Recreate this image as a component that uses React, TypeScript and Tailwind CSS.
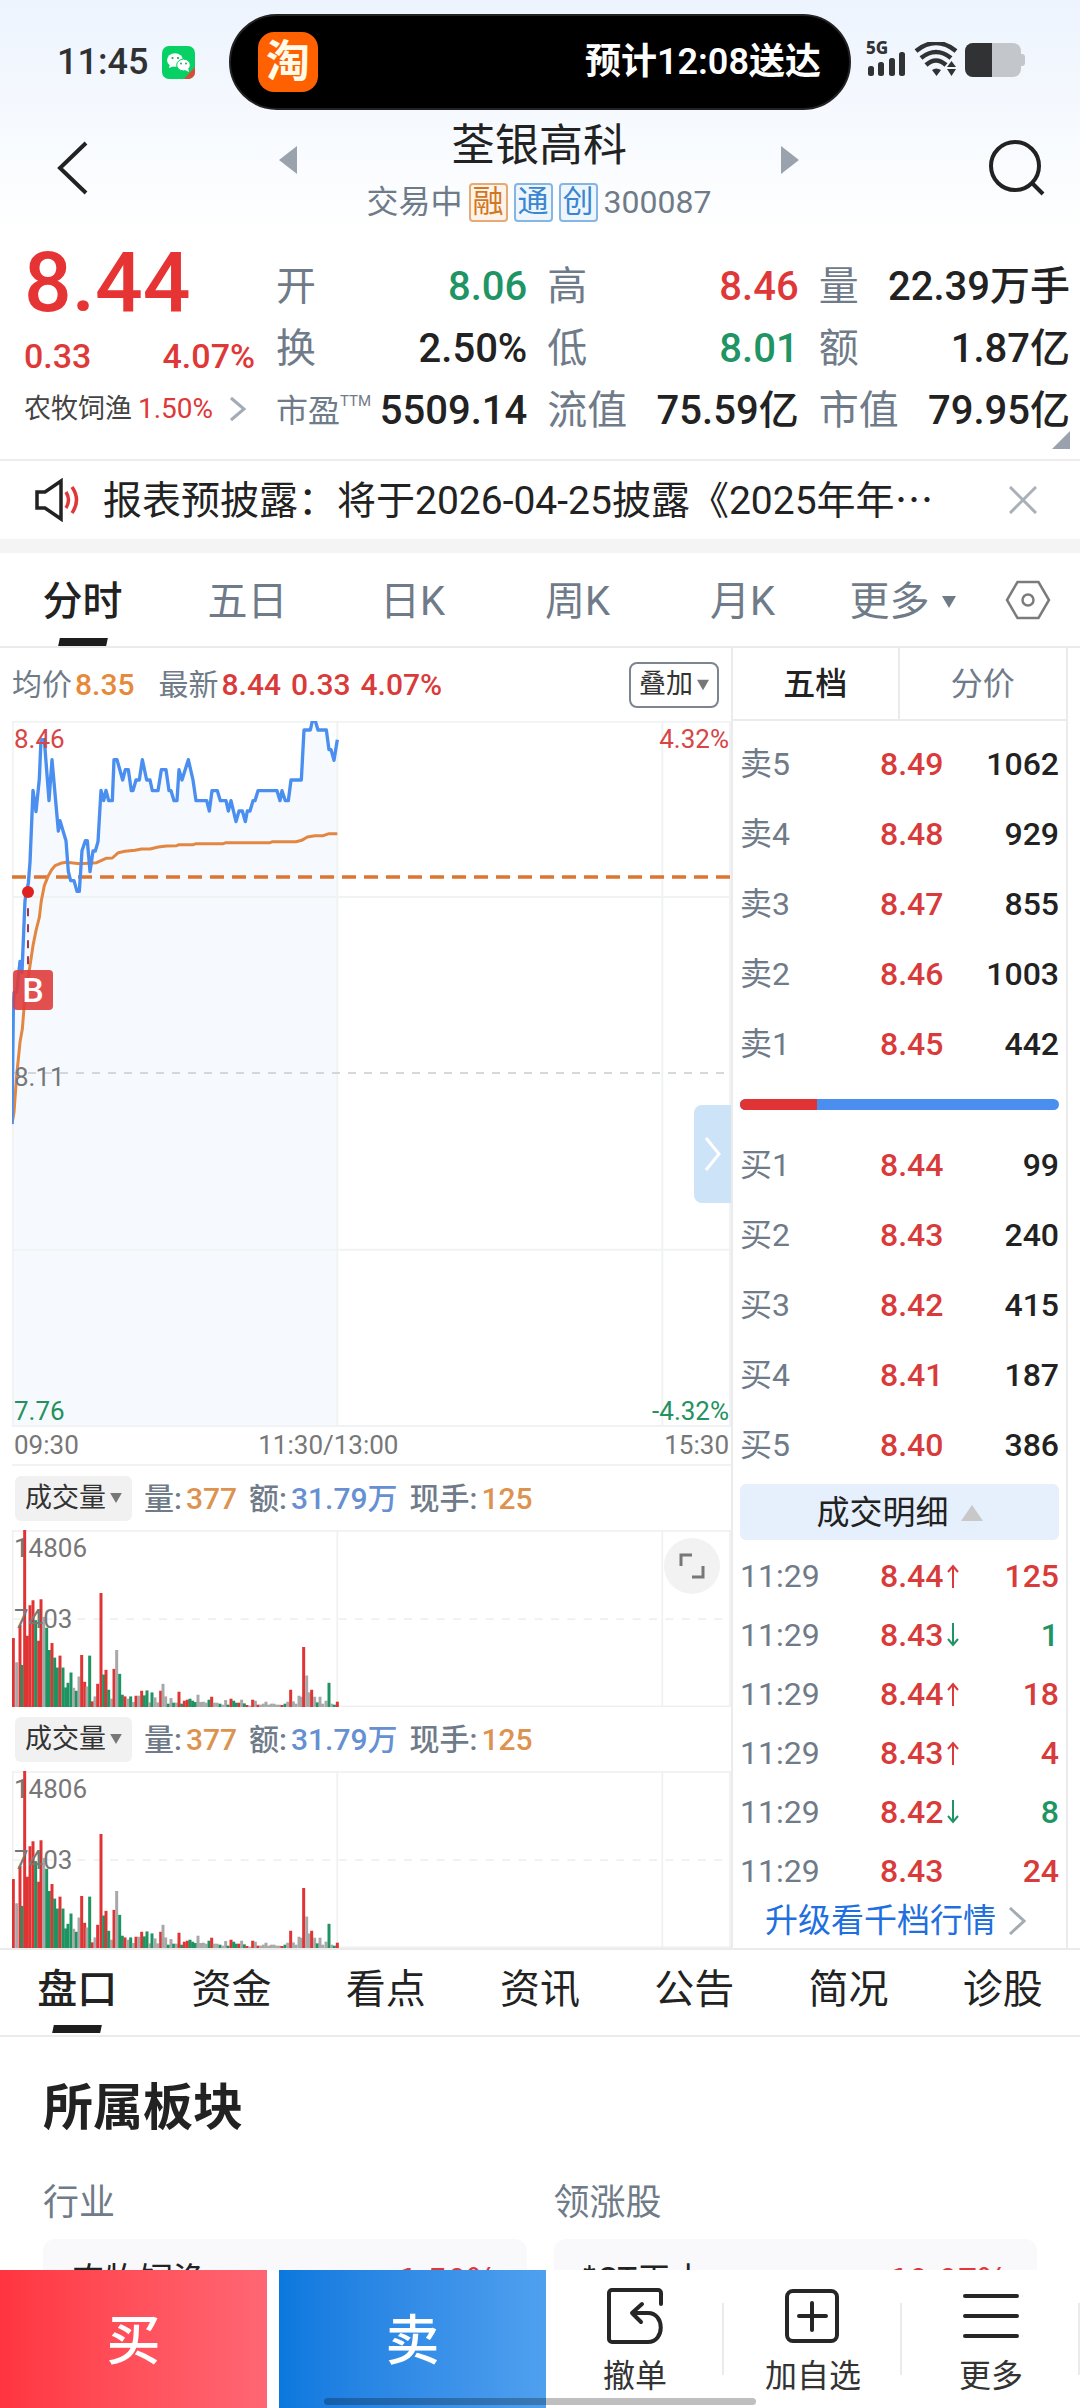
import React from "react";

type Tone = "r" | "g" | "n";

const PRICE_LINE =
  "36,1275 40,930 42,880 50,880 60,787 66,820 75,604 85,552 90,490 99,274 108,338 118,240 123,122 133,122 147,305 156,182 175,396 180,365 198,425 205,518 212,545 222,545 231,577 238,577 246,455 256,425 262,425 270,518 279,456 286,456 294,428 303,274 311,305 318,274 326,305 337,305 342,182 351,182 368,243 376,212 385,212 394,275 399,275 408,243 418,243 427,182 440,243 450,243 457,275 474,275 484,212 498,212 507,275 513,275 522,305 531,305 537,212 546,243 565,182 579,243 588,305 620,305 628,336 636,275 652,275 661,305 678,305 685,336 693,305 708,368 717,336 727,336 736,368 742,336 750,336 759,305 765,305 774,275 831,275 840,305 846,275 856,305 865,305 873,243 904,243 912,93 931,93 937,66 946,66 954,93 979,93 987,152 993,152 1002,184 1012,122";

const AVERAGE_LINE =
  "36,1275 42,1240 50,1130 60,1030 67,990 75,890 90,800 99,740 108,695 118,655 124,605 133,560 145,530 155,512 165,500 182,493 198,490 240,494 290,491 318,478 337,477 355,461 375,457 405,454 425,450 450,450 475,444 500,441 530,440 537,437 580,437 588,434 670,434 678,431 810,431 818,428 888,428 905,424 922,414 945,410 970,410 987,404 1012,404";

const VOLUME_BARS: [number, number, Tone][] = [
  [40, 354, "r"], [50, 427, "n"], [60, 315, "r"], [66, 435, "g"], [74, 28, "r"], [82, 347, "r"],
  [90, 255, "r"], [99, 240, "r"], [107, 300, "g"], [116, 362, "r"], [123, 237, "r"], [131, 290, "n"],
  [140, 323, "g"], [148, 390, "g"], [156, 369, "r"], [164, 413, "g"], [172, 443, "g"], [180, 407, "r"],
  [189, 443, "g"], [197, 503, "g"], [204, 489, "g"], [213, 458, "g"], [221, 504, "n"], [229, 513, "g"],
  [237, 470, "n"], [245, 405, "r"], [254, 486, "r"], [261, 500, "n"], [269, 407, "g"], [277, 545, "r"],
  [285, 530, "n"], [293, 492, "r"], [303, 218, "r"], [311, 464, "g"], [318, 450, "r"], [326, 510, "g"],
  [334, 537, "n"], [342, 447, "r"], [350, 390, "n"], [359, 462, "g"], [367, 525, "g"], [375, 530, "r"],
  [384, 537, "n"], [392, 530, "g"], [400, 547, "n"], [408, 528, "r"], [416, 528, "n"], [425, 513, "r"],
  [433, 527, "g"], [441, 512, "g"], [449, 548, "n"], [456, 518, "g"], [465, 533, "n"], [473, 548, "n"],
  [482, 513, "r"], [489, 492, "n"], [497, 530, "n"], [505, 552, "g"], [513, 535, "n"], [521, 549, "g"],
  [529, 549, "n"], [537, 516, "r"], [545, 552, "g"], [553, 543, "r"], [562, 540, "r"], [570, 537, "g"],
  [578, 543, "g"], [586, 547, "g"], [594, 525, "n"], [602, 547, "n"], [610, 546, "n"], [618, 549, "n"],
  [627, 540, "g"], [635, 531, "r"], [643, 549, "n"], [651, 549, "n"], [660, 552, "g"], [668, 555, "n"],
  [677, 541, "n"], [684, 555, "g"], [693, 537, "r"], [701, 543, "g"], [709, 549, "g"], [717, 549, "r"],
  [725, 540, "n"], [733, 551, "g"], [741, 556, "r"], [749, 558, "n"], [758, 540, "r"], [766, 543, "n"],
  [774, 555, "r"], [782, 555, "n"], [790, 552, "n"], [798, 546, "n"], [806, 555, "n"], [814, 552, "n"],
  [822, 552, "n"], [830, 555, "n"], [838, 555, "n"], [846, 556, "r"], [855, 552, "g"], [863, 546, "n"],
  [872, 510, "r"], [880, 545, "n"], [888, 552, "n"], [897, 528, "n"], [904, 531, "n"], [911, 381, "r"],
  [920, 467, "n"], [928, 518, "n"], [935, 510, "r"], [944, 531, "n"], [952, 548, "g"], [960, 531, "n"],
  [968, 552, "n"], [978, 543, "n"], [987, 489, "g"], [995, 552, "n"], [1003, 555, "g"], [1012, 546, "r"],
];

const BAR_COLOR: Record<Tone, string> = { r: "#e03434", g: "#1e9463", n: "#a8a8a8" };

const SELLS = [["卖5", "8.49", "1062"], ["卖4", "8.48", "929"], ["卖3", "8.47", "855"], ["卖2", "8.46", "1003"], ["卖1", "8.45", "442"]];
const BUYS = [["买1", "8.44", "99"], ["买2", "8.43", "240"], ["买3", "8.42", "415"], ["买4", "8.41", "187"], ["买5", "8.40", "386"]];
const TRADES: [string, "up" | "down" | "", string, Tone][] = [
  ["8.44", "up", "125", "r"],
  ["8.43", "down", "1", "g"],
  ["8.44", "up", "18", "r"],
  ["8.43", "up", "4", "r"],
  ["8.42", "down", "8", "g"],
  ["8.43", "", "24", "r"],
];

function Stat({ label, value, tone = "text-[#222]" }: { label: React.ReactNode; value: string; tone?: string }) {
  return (
    <div className="flex h-[62px] items-center justify-between whitespace-nowrap">
      <dt className="text-[40px] text-[#6f7b88]">{label}</dt>
      <dd className={`text-[40px] font-medium ${tone}`}>{value}</dd>
    </div>
  );
}

function Caret({ className }: { className: string }) {
  return (
    <svg viewBox="0 0 14 12" className={className} aria-hidden="true">
      <path d="M0 0h14L7 12z" fill="currentColor" />
    </svg>
  );
}

function StatusBar() {
  return (
    <div className="flex h-[110px] pt-[14px]">
      <div className="flex w-[229px] shrink-0 items-center gap-3.5 pl-[57px]">
        <span className="text-[36px] font-medium text-[#2f3133]">11:45</span>
        <svg viewBox="0 0 33 33" className="size-[33px]" aria-hidden="true">
          <rect width="33" height="33" rx="7" fill="#07d065" />
          <path d="M33 21v5a7 7 0 0 1-7 7h-4z" fill="#dc4a38" />
          <ellipse cx="13" cy="14" rx="8" ry="6.8" fill="#fff" />
          <path d="M8 18l-1 4 5-2z" fill="#fff" />
          <ellipse cx="21.500" cy="19" rx="6.800" ry="5.900" fill="#fff" stroke="#07d065" />
          <path d="M23 24l4 2-1-4z" fill="#fff" />
          <g fill="#12a357">
            <circle cx="10.500" cy="12" r="1.100" />
            <circle cx="16" cy="12" r="1.100" />
            <circle cx="19" cy="17.500" r="0.900" />
            <circle cx="24" cy="17.500" r="0.900" />
          </g>
        </svg>
      </div>
      <div className="flex h-[96px] flex-1 items-center justify-between rounded-full border-2 border-[#222] bg-black pl-[27px] pr-[28px]">
        <span className="flex size-[60px] items-center justify-center rounded-[16px] bg-[#ff6000] text-[44px] font-bold leading-none text-[#fffbe8]">
          淘
        </span>
        <span className="text-[36px] font-semibold text-white">预计12:08送达</span>
      </div>
      <div className="flex w-[229px] shrink-0 items-center pb-1 pl-[15px]">
        <div className="relative">
          <span className="absolute -top-1.5 left-0 font-['Noto_Sans',sans-serif] text-[17px] font-extrabold leading-6 text-[#303234]">5G</span>
          <svg viewBox="0 0 160 36" className="h-9 w-40" aria-hidden="true">
            <g fill="#303234">
              <rect x="2" y="24" width="6" height="10" rx="2.500" />
              <rect x="12" y="20" width="6" height="14" rx="2.500" />
              <rect x="23" y="16" width="6" height="18" rx="2.500" />
              <rect x="33" y="10" width="6" height="24" rx="2.500" />
              <path d="M66 28q4-3 9 0l-4.500 6z" />
              <path d="M81 27h9l-4.500 7zM81 25h9l-4.500-6z" />
            </g>
            <g fill="none" stroke="#303234" strokeWidth="4.500">
              <path d="M50 9Q70-7 90 9" />
              <path d="M55 16Q70 4 85 16" />
              <path d="M60 23Q70 14 80 23" />
            </g>
            <rect x="99" y="1" width="56" height="34" rx="8" fill="#c3c6ca" />
            <path d="M155 12h1a3 3 0 0 1 3 3v6a3 3 0 0 1-3 3h-1z" fill="#c3c6ca" />
            <path d="M126 1v34h-19a8 8 0 0 1-8-8V9a8 8 0 0 1 8-8z" fill="#303234" />
          </svg>
        </div>
      </div>
    </div>
  );
}

function Header() {
  return (
    <header className="flex h-[126px] items-start justify-between pl-[54px] pr-[34px]">
      <button aria-label="返回" className="mt-[31px]">
        <svg viewBox="0 0 36 54" className="h-[54px] w-9" fill="none" stroke="#222" strokeWidth="4">
          <path d="M32 2L6 27l26 25" />
        </svg>
      </button>
      <div className="flex w-[520px] items-start justify-between">
        <button aria-label="上一只" className="mt-9 text-[#9aa3ad]">
          <svg viewBox="0 0 18 28" className="h-7 w-[18px]"><path d="M18 0v28L0 14z" fill="currentColor" /></svg>
        </button>
        <div className="flex flex-col items-center whitespace-nowrap">
          <h1 className="h-[70px] text-[44px] leading-[72px] text-[#222]">荃银高科</h1>
          <div className="flex h-[44px] items-center gap-1.5 text-[32px] text-[#6f7b88]">
            <span>交易中</span>
            <span className="flex size-[39px] items-center justify-center rounded-sm border-2 border-[#e5aa75] bg-[#fdf3e8] text-[31px] text-[#d2761f]">融</span>
            <span className="flex size-[39px] items-center justify-center rounded-sm border-2 border-[#86b5e3] bg-[#eef6fd] text-[31px] text-[#3a86cf]">通</span>
            <span className="flex size-[39px] items-center justify-center rounded-sm border-2 border-[#86b5e3] bg-[#eef6fd] text-[31px] text-[#3a86cf]">创</span>
            <span>300087</span>
          </div>
        </div>
        <button aria-label="下一只" className="mt-9 text-[#9aa3ad]">
          <svg viewBox="0 0 18 28" className="h-7 w-[18px]"><path d="M0 0v28l18-14z" fill="currentColor" /></svg>
        </button>
      </div>
      <button aria-label="搜索" className="mt-[29px]">
        <svg viewBox="0 0 58 58" className="size-[58px]" fill="none" stroke="#222" strokeWidth="4">
          <circle cx="27" cy="27" r="24" />
          <path d="M44 44l11 11" />
        </svg>
      </button>
    </header>
  );
}

function Quote() {
  return (
    <section className="relative flex h-[223px] pt-3 pr-2.5">
      <div className="flex w-[276px] shrink-0 flex-col pl-6">
        <div className="h-[70px] text-[84px] font-medium leading-[70px] text-[#e63434]">8.44</div>
        <div className="mt-3 flex h-[52px] w-[231px] items-center justify-between text-[34px] font-medium text-[#de3838]">
          <span>0.33</span>
          <span>4.07%</span>
        </div>
        <a href="#sector" className="flex h-[54px] items-center gap-1.5 whitespace-nowrap text-[27px] text-[#444]">
          农牧饲渔
          <span className="text-[28px] text-[#de3838]">1.50%</span>
          <svg viewBox="0 0 18 26" className="ml-2.5 h-[26px] w-[18px]" fill="none" stroke="#a3abb5" strokeWidth="3">
            <path d="M2 2l13 11L2 24" />
          </svg>
        </a>
      </div>
      <dl className="mt-2 grid h-fit flex-1 grid-cols-3 gap-x-5">
        <Stat label="开" value="8.06" tone="text-[#1f9465]" />
        <Stat label="高" value="8.46" tone="text-[#de3838]" />
        <Stat label="量" value="22.39万手" />
        <Stat label="换" value="2.50%" />
        <Stat label="低" value="8.01" tone="text-[#1f9465]" />
        <Stat label="额" value="1.87亿" />
        <Stat
          label={<span className="flex text-[32px]">市盈<span className="text-[15px] leading-7">TTM</span></span>}
          value="5509.14"
        />
        <Stat label="流值" value="75.59亿" />
        <Stat label="市值" value="79.95亿" />
      </dl>
      <svg viewBox="0 0 18 18" className="absolute right-2.5 bottom-2.5 size-[18px]" aria-hidden="true">
        <path d="M18 0v18H0z" fill="#9aa3ad" />
      </svg>
    </section>
  );
}

function Notice() {
  return (
    <div className="flex h-[94px] items-center border-t-2 border-b-[14px] border-t-[#ededed] border-b-[#f4f4f4] pl-[35px] pr-[43px]">
      <svg viewBox="0 0 46 44" className="h-11 w-[46px] shrink-0" fill="none" aria-hidden="true">
        <path d="M2 14h8L26 3v38L10 30H2z" stroke="#222" strokeWidth="3.500" />
        <path d="M31 14q5 8 0 16M37 9q9 13 0 26" stroke="#de3838" strokeWidth="3.500" />
      </svg>
      <p className="ml-[22px] flex-1 whitespace-nowrap pt-0.5 text-[39px] text-[#222]">
        报表预披露：将于2026-04-25披露《2025年年⋯
      </p>
      <button aria-label="关闭">
        <svg viewBox="0 0 28 28" className="size-7" fill="none" stroke="#a9b0b8" strokeWidth="3">
          <path d="M1 1l26 26M27 1L1 27" />
        </svg>
      </button>
    </div>
  );
}

function ChartTabs() {
  return (
    <nav className="grid h-[95px] grid-cols-[165fr_165fr_165fr_165fr_165fr_155fr_100fr] border-b-2 border-[#ebebeb] text-[40px] text-[#6f7b88]">
      <button className="relative pt-1 font-medium text-[#222]">
        分时
        <span className="absolute bottom-0 left-1/2 h-2 w-12 -translate-x-1/2 -skew-x-12 bg-[#1d1d1d]" />
      </button>
      <button className="pt-1">五日</button>
      <button className="pt-1">日K</button>
      <button className="pt-1">周K</button>
      <button className="pt-1">月K</button>
      <button className="flex items-center justify-center gap-3 pt-1">更多<Caret className="h-3 w-3.5" /></button>
      <button aria-label="设置" className="flex items-center justify-center pr-1">
        <svg viewBox="0 0 46 40" className="h-10 w-[46px]" fill="none" stroke="#7b7b7b" strokeWidth="2.500">
          <path d="M12.500 2h21L44 20 33.500 38h-21L2 20z" />
          <circle cx="23" cy="20" r="5.500" />
        </svg>
      </button>
    </nav>
  );
}

function PriceChart() {
  return (
    <div className="relative h-[706px] text-[26px] leading-8">
      <svg viewBox="36 66 2157 2118" preserveAspectRatio="none" className="absolute inset-0 h-full w-full" aria-label="分时走势">
        <polygon points={`36,2184 ${PRICE_LINE} 1012,2184`} fill="#f6faff" />
        <g stroke="#f1f2f4" strokeWidth="6" fill="none">
          <path d="M36 68H2193M36 594H2193M36 1652H2193M36 2181H2193M38 66V2184M1012 66V2184M1987 66V2184M2190 66V2184" />
        </g>
        <path d="M36 1122H2193" stroke="#c9cbce" strokeWidth="5" strokeDasharray="24 24" />
        <path d="M36 534H2193" stroke="#dd7430" strokeWidth="10" strokeDasharray="42 24" />
        <polyline points={AVERAGE_LINE} fill="none" stroke="#e38641" strokeWidth="9" strokeLinejoin="round" />
        <polyline points={PRICE_LINE} fill="none" stroke="#4a8ff0" strokeWidth="10" strokeLinejoin="round" />
        <path d="M84 604V800" stroke="#a03a48" strokeWidth="6" strokeDasharray="24 24" strokeDashoffset="24" />
        <circle cx="84" cy="579" r="18" fill="#de2222" />
      </svg>
      <span className="absolute left-0.5 top-0.5 text-[#d84545]">8.46</span>
      <span className="absolute right-0.5 top-0.5 text-[#d84545]">4.32%</span>
      <span className="absolute left-0.5 top-[340px] text-[#777]">8.11</span>
      <span className="absolute bottom-0 left-0.5 text-[#24915f]">7.76</span>
      <span className="absolute bottom-0 right-0.5 text-[#24915f]">-4.32%</span>
      <span className="absolute left-px top-[249px] flex size-10 items-center justify-center rounded-sm bg-[#e03c3c]/90 text-[34px] font-medium text-white">B</span>
      <button aria-label="展开" className="absolute right-0 top-[384px] flex h-[98px] w-[37px] items-center justify-center rounded-l-lg bg-[#cde3f8]">
        <svg viewBox="0 0 18 34" className="h-[34px] w-[18px]" fill="none" stroke="#fff" strokeWidth="3">
          <path d="M2 1l13 16L2 33" />
        </svg>
      </button>
    </div>
  );
}

function VolumePanel({ expandable = false }: { expandable?: boolean }) {
  return (
    <section>
      <div className="flex h-16 items-center gap-3 pl-[3px] text-[30px] font-medium text-[#6f7b88]">
        <button className="flex h-[45px] w-[117px] items-center justify-center gap-1 rounded-md bg-[#f1f1f1] text-[27px] font-normal text-[#333]">
          成交量<Caret className="h-2.5 w-3 text-[#777]" />
        </button>
        <span>量:<b className="ml-1 font-medium text-[#dd9350]">377</b></span>
        <span>额:<b className="ml-1 font-medium text-[#6790d2]">31.79万</b></span>
        <span>现手:<b className="ml-1 font-medium text-[#dd9350]">125</b></span>
      </div>
      <div className="relative h-[177px] text-[26px] leading-8 text-[#777]">
        <svg viewBox="36 28 2157 534" preserveAspectRatio="none" className="absolute inset-0 h-full w-full" aria-label="成交量">
          <g stroke="#f0f0f0" strokeWidth="5" fill="none">
            <path d="M36 31H2193M36 560H2193M38 28V562M1012 28V562M1987 28V562M2190 28V562" />
            <path d="M36 297H2175" strokeDasharray="24 25" />
          </g>
          {VOLUME_BARS.map(([x, y, tone]) => (
            <path key={x} d={`M${x} ${y}V562`} stroke={BAR_COLOR[tone]} strokeWidth="9" />
          ))}
        </svg>
        <span className="absolute left-0.5 top-0.5">14806</span>
        <span className="absolute left-0.5 top-[73px]">7403</span>
        {expandable && (
          <button aria-label="全屏" className="absolute right-[11px] top-2 flex size-14 items-center justify-center rounded-full bg-[#f2f2f2]">
            <svg viewBox="0 0 26 26" className="size-[26px]" fill="none" stroke="#777" strokeWidth="3">
              <path d="M2 13V2h11M24 13v11H13" />
            </svg>
          </button>
        )}
      </div>
    </section>
  );
}

function OrderRows({ rows }: { rows: string[][] }) {
  return (
    <table className="w-full table-fixed text-[32px] leading-8">
      <tbody>
        {rows.map(([label, price, amount]) => (
          <tr key={label} className="h-[70px]">
            <th scope="row" className="w-[140px] text-left font-normal text-[#6f7b88]">{label}</th>
            <td className="w-20 font-medium text-[#d93a3a]">{price}</td>
            <td className="text-right font-medium text-[#222]">{amount}</td>
          </tr>
        ))}
      </tbody>
    </table>
  );
}

function Arrow({ dir }: { dir: "up" | "down" }) {
  return (
    <svg viewBox="0 0 12 24" className="h-6 w-3" fill="none" stroke={dir === "up" ? "#d93a3a" : "#1f9465"} strokeWidth="2" aria-hidden="true">
      <path d={dir === "up" ? "M6 24V2M1 8l5-6 5 6" : "M6 0v22M1 16l5 6 5-6"} />
    </svg>
  );
}

function OrderBook() {
  return (
    <aside className="mr-3 flex w-[337px] shrink-0 flex-col border-x-2 border-[#ebebeb]">
      <div className="grid h-[73px] grid-cols-2 border-b-2 border-[#ebebeb] text-[32px]">
        <button className="border-r-2 border-[#ebebeb] font-medium text-[#222]">五档</button>
        <button className="text-[#6f7b88]">分价</button>
      </div>
      <div className="flex flex-col px-[7px]">
        <div className="mt-2"><OrderRows rows={SELLS} /></div>
        <div className="my-5 flex h-[11px] overflow-hidden rounded-full bg-[#4a8ff0]">
          <div className="w-[24%] bg-[#e03434]" />
        </div>
        <OrderRows rows={BUYS} />
        <button className="mt-1 flex h-14 items-center justify-center gap-3 rounded-md bg-[#e6effc] pt-0.5 text-[33px] text-[#222]">
          成交明细
          <svg viewBox="0 0 22 16" className="h-4 w-[22px]" aria-hidden="true"><path d="M11 0l11 16H0z" fill="#c8c8c8" /></svg>
        </button>
        <table className="mt-1.5 w-full table-fixed text-[32px] leading-8">
          <tbody>
            {TRADES.map(([price, dir, amount, tone], i) => (
              <tr key={i} className="h-[59px]">
                <td className="w-[140px] text-[#6f7b88]">11:29</td>
                <td className="w-[90px] font-medium text-[#d93a3a]">
                  <span className="flex items-center gap-1">{price}{dir && <Arrow dir={dir} />}</span>
                </td>
                <td className={tone === "r" ? "text-right font-medium text-[#d93a3a]" : "text-right font-medium text-[#1f9465]"}>{amount}</td>
              </tr>
            ))}
          </tbody>
        </table>
        <a href="#level" className="flex h-[42px] items-center justify-center gap-3 pr-2 text-[33px] text-[#1f6fe0]">
          升级看千档行情
          <svg viewBox="0 0 18 28" className="h-7 w-[18px]" fill="none" stroke="#a3abb5" strokeWidth="3"><path d="M2 1l14 13L2 27" /></svg>
        </a>
      </div>
    </aside>
  );
}

function SectorCard({ title, name, change }: { title: string; name: string; change: string }) {
  return (
    <div className="flex-1">
      <h3 className="h-[62px] text-[36px] leading-[52px] text-[#6f7b88]">{title}</h3>
      <div className="flex h-40 justify-between rounded-xl bg-[#f9f9fc] px-7 pt-4 text-[34px] leading-[46px] text-[#222] font-['Noto_Sans_CJK_SC',sans-serif]">
        <span>{name}</span>
        <span className="font-medium text-[#de3838]">{change}</span>
      </div>
    </div>
  );
}

function ActionButton({ label, children }: { label: string; children: React.ReactNode }) {
  return (
    <button className="relative flex flex-[178] flex-col items-center pt-[18px] text-[32px] text-[#333]">
      <svg viewBox="0 0 58 56" className="h-14 w-[58px]" fill="none" stroke="#262626" strokeWidth="4" strokeLinecap="round" strokeLinejoin="round" aria-hidden="true">
        {children}
      </svg>
      <span className="mt-2 leading-[48px]">{label}</span>
      <span className="absolute right-0 top-[33px] h-[72px] w-0.5 bg-[#ebebeb]" />
    </button>
  );
}

export default function App() {
  return (
    <div className="flex h-screen flex-col overflow-hidden bg-white font-[Roboto,'Noto_Sans_CJK_SC',sans-serif]">
      <main className="min-h-0 flex-1 overflow-hidden">
        <div className="bg-linear-to-b from-[#edf4fe] to-white">
          <StatusBar />
          <Header />
        </div>
        <Quote />
        <Notice />
        <ChartTabs />
        <div className="flex border-b-2 border-[#ebebeb] pl-3">
          <div className="min-w-0 flex-1">
            <div className="flex h-[73px] items-center whitespace-nowrap pr-3 text-[30px] font-medium text-[#d93a3a]">
              <span className="font-normal text-[#6f7b88]">均价</span>
              <span className="ml-[3px] text-[#e8893a]">8.35</span>
              <span className="ml-6 font-normal text-[#6f7b88]">最新</span>
              <span className="ml-[3px]">8.44</span>
              <span className="ml-2.5">0.33</span>
              <span className="ml-2.5">4.07%</span>
              <button className="ml-auto flex h-[46px] w-[90px] items-center justify-center gap-1 rounded-lg border-2 border-[#7c858f] text-[27px] font-normal text-[#333]">
                叠加<Caret className="h-3 w-3 text-[#777]" />
              </button>
            </div>
            <PriceChart />
            <div className="relative flex h-[39px] items-center justify-between border-b-2 border-[#f2f2f2] px-0.5 text-[26px] text-[#777]">
              <span>09:30</span>
              <span className="absolute left-[44%] -translate-x-1/2">11:30/13:00</span>
              <span>15:30</span>
            </div>
            <VolumePanel expandable />
            <VolumePanel />
          </div>
          <OrderBook />
        </div>
        <nav className="grid h-[87px] grid-cols-7 border-b-2 border-[#ebebeb] pb-0.5 text-[40px] text-[#222]">
          <button className="relative pb-1 font-medium">
            盘口
            <span className="absolute bottom-0 left-1/2 h-2 w-12 -translate-x-1/2 -skew-x-12 bg-[#1d1d1d]" />
          </button>
          <button className="pb-1">资金</button>
          <button className="pb-1">看点</button>
          <button className="pb-1">资讯</button>
          <button className="pb-1">公告</button>
          <button className="pb-1">简况</button>
          <button className="pb-1">诊股</button>
        </nav>
        <section id="sector" className="px-[43px] pt-8">
          <h2 className="text-[50px] font-bold leading-[78px] text-[#222]">所属板块</h2>
          <div className="mt-[30px] flex gap-[27px]">
            <SectorCard title="行业" name="农牧饲渔" change="1.50%" />
            <SectorCard title="领涨股" name="*ST天山" change="10.07%" />
          </div>
        </section>
      </main>
      <footer className="relative flex h-[138px] shrink-0 bg-white">
        <button className="flex-[267] bg-linear-to-r from-[#ff3440] to-[#ff6673] pt-1 text-[54px] font-medium text-white">买</button>
        <button className="ml-3 flex-[267] bg-linear-to-r from-[#0a78de] to-[#4fa0ef] pt-1 text-[54px] font-medium text-white">卖</button>
        <ActionButton label="撤单">
          <path d="M55 16V5a3 3 0 0 0-3-3H6a3 3 0 0 0-3 3v46a3 3 0 0 0 3 3h36c17 0 17-29 0-29H28M36 16l-10 9 9 9" />
        </ActionButton>
        <ActionButton label="加自选">
          <rect x="3" y="3" width="50" height="50" rx="6" />
          <path d="M28 15v27M15 28h27" />
        </ActionButton>
        <ActionButton label="更多">
          <path d="M3 8h52M3 28h52M3 48h52" />
        </ActionButton>
        <span className="absolute bottom-[3px] left-[30%] h-[7px] w-[40%] rounded-full bg-black/25" />
      </footer>
    </div>
  );
}
